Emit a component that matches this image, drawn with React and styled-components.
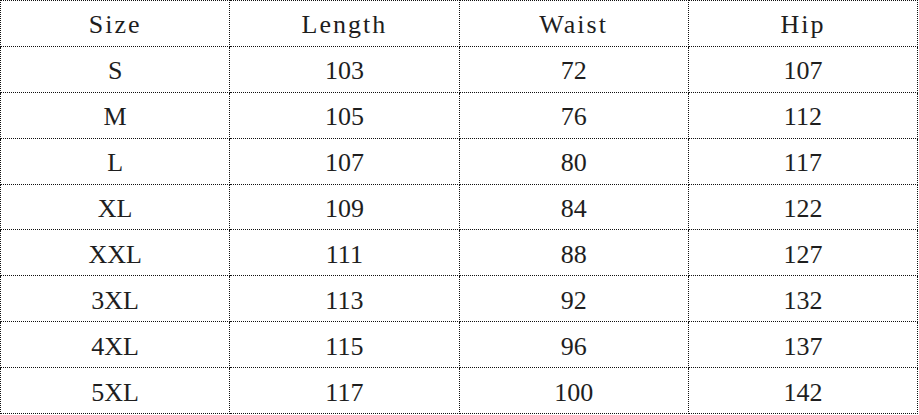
import styled, { createGlobalStyle } from 'styled-components';

const GlobalStyle = createGlobalStyle`
  html, body {
    margin: 0;
    padding: 0;
    background: #fff;
  }
`;

const Page = styled.div`
  width: 919px;
  height: 415px;
  background: #fff;
  overflow: hidden;
`;

const Table = styled.table`
  width: 918px;
  height: 414px;
  border-collapse: collapse;
  table-layout: fixed;
  border-top: 1px dotted #d8d8d8;
  border-right: 1px dotted #c8c8c8;
`;

const Cell = styled.td`
  border: 1px dotted #111;
  text-align: center;
  vertical-align: middle;
  font-family: "Liberation Serif", serif;
  font-size: 26px;
  line-height: 1;
  color: #1e1e1e;
  padding: 4px 0 0;
  letter-spacing: ${p => (p.$head ? '2px' : '0')};
`;

const sizes = [
  ['S', 103, 72, 107],
  ['M', 105, 76, 112],
  ['L', 107, 80, 117],
  ['XL', 109, 84, 122],
  ['XXL', 111, 88, 127],
  ['3XL', 113, 92, 132],
  ['4XL', 115, 96, 137],
  ['5XL', 117, 100, 142],
];

const headers = ['Size', 'Length', 'Waist', 'Hip'];

export default function App() {
  return (
    <Page>
      <GlobalStyle />
      <Table>
        <tbody>
          <tr>
            {headers.map(h => (
              <Cell key={h} $head>{h}</Cell>
            ))}
          </tr>
          {sizes.map(row => (
            <tr key={row[0]}>
              {row.map((v, i) => (
                <Cell key={i}>{v}</Cell>
              ))}
            </tr>
          ))}
        </tbody>
      </Table>
    </Page>
  );
}
